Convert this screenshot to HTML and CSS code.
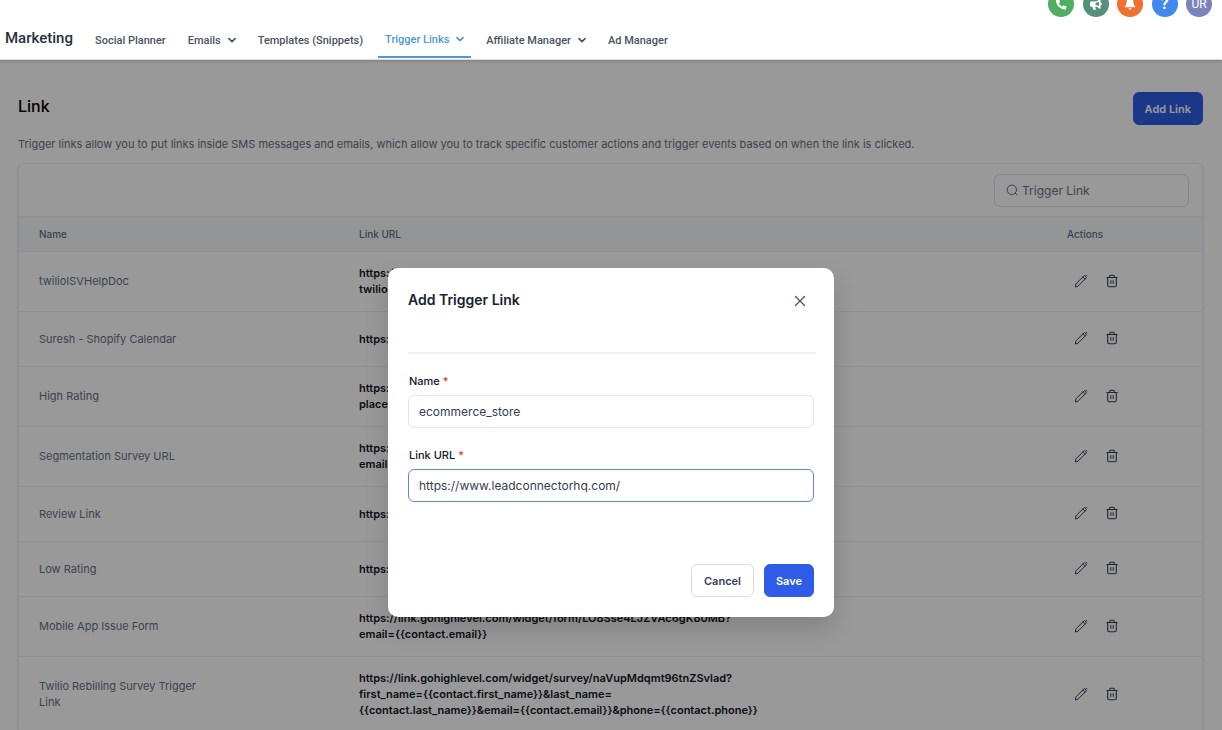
FILE: index.html
```html
<!DOCTYPE html>
<html lang="en">
<head>
  <meta charset="UTF-8" />
  <meta name="viewport" content="width=device-width, initial-scale=1.0"/>
  <title>Trigger Links</title>
  <link rel="stylesheet" href="styles.css">
</head>
<body>
  <!-- shared icons -->
  <svg class="sprite" aria-hidden="true">
    <symbol id="chevron" viewBox="0 0 8 8"><path d="M1 2.6 4 5.6 7 2.6" fill="none" stroke="currentColor" stroke-width="1.7" stroke-linecap="round" stroke-linejoin="round"/></symbol>
    <symbol id="pencil" viewBox="0 0 14 14"><path d="M1.4 12.6 2 9.8 9.8 2a.9.9 0 0 1 1.3 0l.9.9a.9.9 0 0 1 0 1.3L4.200 12zM8.800 3l2.200 2.200M12 1.200l.8.8" fill="none" stroke="currentColor" stroke-linecap="round" stroke-linejoin="round"/></symbol>
    <symbol id="trash" viewBox="0 0 14 14"><path d="M1.800 3.500h10.400M4.800 3.400V2.200c0-.5.4-.9.9-.9h2.600c.5 0 .9.4.9.9v1.200M2.700 3.800v7.500c0 .8.600 1.400 1.400 1.400h5.800c.8 0 1.400-.6 1.400-1.400V3.800" fill="none" stroke="currentColor" stroke-width="1.100" stroke-linecap="round"/><path d="M5.500 6.200v3.600M7 6.200v3.600M8.500 6.200v3.600" stroke="currentColor" stroke-width=".7"/></symbol>
  </svg>

  <header class="header">
    <div class="tools">
      <button class="tool phone" aria-label="Phone"><svg viewBox="0 0 16 16"><path fill="#fff" d="M2.700 3 5 2.200c.4-.1.7.1.9.4l1 2.500c.1.3 0 .7-.2.9L5.500 7a8.500 8.500 0 0 0 4 4l1-1.200c.2-.3.6-.4.9-.2l2.500 1c.3.2.5.5.4.9l-.8 2.300c-.1.400-.4.600-.8.600C7.300 14.400 2.200 9.300 2.200 3.800c0-.4.200-.7.5-.8z"/></svg></button>
      <button class="tool news" aria-label="Announcements"><svg viewBox="0 0 16 16"><path fill="none" stroke="#fff" stroke-width="1.800" stroke-linejoin="round" d="M7 6c2 0 4-1 5.300-2.500v9C11 11 9 10 7 10"/><path fill="#fff" d="M2.500 5H7.500v6H7l1 3.500H5L4 11H2.500C1.700 11 1.200 10.500 1.200 9.800V6.200C1.200 5.500 1.700 5 2.500 5zM13 6.300a1.700 1.700 0 0 1 0 3.400z"/></svg></button>
      <button class="tool bell" aria-label="Notifications"><svg viewBox="0 0 16 16"><path fill="#fff" d="M8 1.500c-2.600 0-4 1.900-4 4.200 0 2.700-.8 3.800-1.700 4.700-.5.600-.2 1.400.6 1.400h10.200c.8 0 1.100-.8.6-1.400-.9-.9-1.700-2-1.700-4.700 0-2.300-1.400-4.200-4-4.200zM6.300 12.800h3.400a1.700 1.700 0 0 1-3.400 0z"/></svg></button>
      <button class="tool help" aria-label="Help">?</button>
      <button class="tool user">UR</button>
    </div>
    <nav class="nav">
      <h1>Marketing</h1>
      <a href="#">Social Planner</a>
      <a href="#">Emails <svg><use href="#chevron"/></svg></a>
      <a href="#">Templates (Snippets)</a>
      <a href="#" class="active">Trigger Links <svg><use href="#chevron"/></svg></a>
      <a href="#">Affiliate Manager <svg><use href="#chevron"/></svg></a>
      <a href="#">Ad Manager</a>
    </nav>
  </header>

  <main class="main">
    <div class="title">
      <h2>Link</h2>
      <button class="btn primary">Add Link</button>
    </div>
    <p class="intro">Trigger links allow you to put links inside SMS messages and emails, which allow you to track specific customer actions and trigger events based on when the link is clicked.</p>

    <div class="card">
      <div class="search-row">
        <label class="search">
          <svg viewBox="0 0 12 12"><path d="M10.600 5.800a4.700 4.700 0 1 1-9.400 0 4.700 4.700 0 0 1 9.400 0zM9.200 9.200l1.800 1.800" fill="none" stroke="currentColor" stroke-linecap="round"/></svg>
          <input type="text" placeholder="Trigger Link" aria-label="Search trigger links">
        </label>
      </div>
      <table>
        <thead>
          <tr><th class="name">Name</th><th>Link URL</th><th class="actions">Actions</th></tr>
        </thead>
        <tbody>
          <tr>
            <td>twilioISVHelpDoc</td>
            <td class="url">https://<br>twilio</td>
            <td><button class="icon" aria-label="Edit"><svg><use href="#pencil"/></svg></button><button class="icon" aria-label="Delete"><svg><use href="#trash"/></svg></button></td>
          </tr>
          <tr>
            <td>Suresh - Shopify Calendar</td>
            <td class="url">https://</td>
            <td><button class="icon" aria-label="Edit"><svg><use href="#pencil"/></svg></button><button class="icon" aria-label="Delete"><svg><use href="#trash"/></svg></button></td>
          </tr>
          <tr>
            <td>High Rating</td>
            <td class="url">https://<br>place</td>
            <td><button class="icon" aria-label="Edit"><svg><use href="#pencil"/></svg></button><button class="icon" aria-label="Delete"><svg><use href="#trash"/></svg></button></td>
          </tr>
          <tr>
            <td>Segmentation Survey URL</td>
            <td class="url">https://<br>email</td>
            <td><button class="icon" aria-label="Edit"><svg><use href="#pencil"/></svg></button><button class="icon" aria-label="Delete"><svg><use href="#trash"/></svg></button></td>
          </tr>
          <tr>
            <td>Review Link</td>
            <td class="url">https://</td>
            <td><button class="icon" aria-label="Edit"><svg><use href="#pencil"/></svg></button><button class="icon" aria-label="Delete"><svg><use href="#trash"/></svg></button></td>
          </tr>
          <tr>
            <td>Low Rating</td>
            <td class="url">https://</td>
            <td><button class="icon" aria-label="Edit"><svg><use href="#pencil"/></svg></button><button class="icon" aria-label="Delete"><svg><use href="#trash"/></svg></button></td>
          </tr>
          <tr>
            <td>Mobile App Issue Form</td>
            <td class="url">https://link.gohighlevel.com/widget/form/LO8Sse4LJZVAc6gK80MB?<br>email={{contact.email}}</td>
            <td><button class="icon" aria-label="Edit"><svg><use href="#pencil"/></svg></button><button class="icon" aria-label="Delete"><svg><use href="#trash"/></svg></button></td>
          </tr>
          <tr>
            <td>Twilio Rebilling Survey Trigger<br>Link</td>
            <td class="url">https://link.gohighlevel.com/widget/survey/naVupMdqmt96tnZSvlad?<br>first_name={{contact.first_name}}&amp;last_name=<br>{{contact.last_name}}&amp;email={{contact.email}}&amp;phone={{contact.phone}}</td>
            <td><button class="icon" aria-label="Edit"><svg><use href="#pencil"/></svg></button><button class="icon" aria-label="Delete"><svg><use href="#trash"/></svg></button></td>
          </tr>
        </tbody>
      </table>
    </div>

    <div class="overlay">
      <form class="modal" role="dialog" aria-labelledby="modal-title">
        <div class="modal-head">
          <h3 id="modal-title">Add Trigger Link</h3>
          <button type="button" class="close" aria-label="Close"><svg viewBox="0 0 12 12"><path d="M1.500 1.500l9 9M10.500 1.500l-9 9" stroke="currentColor" stroke-width="1.300" stroke-linecap="round"/></svg></button>
        </div>
        <div class="field">
          <label for="name">Name <span>*</span></label>
          <input type="text" id="name" value="ecommerce_store">
        </div>
        <div class="field">
          <label for="url">Link URL <span>*</span></label>
          <input type="text" id="url" class="current" value="https://www.leadconnectorhq.com/">
        </div>
        <div class="modal-foot">
          <button type="button" class="btn">Cancel</button>
          <button type="button" class="btn primary">Save</button>
        </div>
      </form>
    </div>
  </main>
</body>
</html>
```
FILE: styles.css
```css
* { box-sizing: border-box; }
body { margin: 0; height: 100vh; overflow: hidden; display: flex; flex-direction: column; font-family: Inter, sans-serif; font-size: 12px; color: #111827; background: #fff; }
h1, h2, h3, p { margin: 0; }
button, input { font: inherit; color: inherit; }
button { cursor: pointer; }
.sprite { display: none; }

/* header */
.header { height: 60px; flex: none; background: #fff; border-bottom: 1px solid #ddd; box-shadow: 0 1px 3px rgba(0,0,0,0.2); z-index: 2; font-family: Roboto, sans-serif; }
.tools { display: flex; justify-content: space-between; width: 164px; height: 26px; margin: -9px 10px 0 auto; }
.tool { display: flex; align-items: center; justify-content: center; width: 26px; height: 26px; padding: 0; border: none; border-radius: 50%; color: #fff; line-height: 1; }
.tool svg { width: 14px; height: 14px; }
.phone { background: #4fae63; }
.news { background: #569078; }
.bell { background: #f07030; }
.help { background: #4189ee; font-size: 16px; font-weight: 700; }
.user { background: #7b83bb; font-size: 12px; }
.nav { display: flex; gap: 8px; height: 41px; padding-left: 5px; }
.nav h1 { width: 75px; font-size: 15px; line-height: 42px; font-weight: 500; color: #283040; }
.nav a { display: flex; align-items: center; gap: 7px; height: 41px; padding: 5px 7px 0; font-size: 11px; font-weight: 500; color: #4a5260; text-decoration: none; }
.nav svg { width: 8px; height: 8px; }
.nav a.active { color: #4a9ad8; border-bottom: 2px solid #4a9ad8; }

/* page */
.main { position: relative; flex: 1; overflow: hidden; padding: 32px 19px 0 18px; }
.title { display: flex; justify-content: space-between; }
.title h2 { font-size: 16px; line-height: 29px; font-weight: 500; color: #000; }
.btn { height: 33px; padding: 0 12px; border: 1px solid #d8dbe2; border-radius: 6px; background: #fff; font-size: 11px; font-weight: 600; color: #344054; }
.btn.primary { padding: 0 11px; background: #2e5ce6; border-color: #2e5ce6; color: #fff; }
.intro { margin: 11px 0; font-size: 11px; line-height: 16px; color: #667085; }
.card { border: 1px solid #eceef0; border-radius: 6px; box-shadow: 0 1px 3px rgba(0,0,0,0.12); }
.search-row { display: flex; justify-content: flex-end; height: 52px; padding: 10px 13px; }
.search { display: flex; align-items: center; gap: 4px; width: 195px; height: 33px; padding: 0 11px 1px; border: 1px solid #dfe1e5; border-radius: 6px; color: #667085; }
.search svg { flex: none; width: 12px; height: 12px; }
.search input { width: 100%; border: none; padding: 0; outline: none; background: none; }
.search input::placeholder { color: #667085; opacity: 1; }

table { width: 100%; border-collapse: collapse; table-layout: fixed; }
th { height: 35px; padding: 0 20px; background: #f5f8fc; border-top: 1px solid #eceef1; border-bottom: 1px solid #eceef1; text-align: left; font-size: 10px; font-weight: 500; color: #667085; }
th.name { width: 320px; }
th.actions { width: 155px; }
td { height: 55px; padding: 13px 20px 14px; border-bottom: 1px solid #eceef1; font-size: 11px; line-height: 16px; color: #667085; }
td.url { font-weight: 600; color: #111827; white-space: nowrap; }
.icon { width: 14px; height: 14px; padding: 0; margin: 0 11px 2px 7px; border: none; background: none; color: #344054; vertical-align: middle; }
.icon + .icon { margin-left: 6px; }
.icon svg { display: block; width: 14px; height: 14px; }

/* modal */
.overlay { position: absolute; inset: 0; display: flex; justify-content: center; align-items: flex-start; padding-top: 208px; background: rgba(0,0,0,0.4); }
.modal { width: 446px; padding: 20px; background: #fff; border-radius: 10px; box-shadow: 0 12px 24px rgba(0,0,0,0.15); }
.modal-head { display: flex; justify-content: space-between; height: 66px; margin-right: -2px; margin-bottom: 17px; border-bottom: 2px solid #f0f1f3; }
.modal-head h3 { font-size: 14px; line-height: 23px; font-weight: 600; color: #182230; }
.close { width: 12px; height: 12px; margin: 7px 10px 0 0; padding: 0; border: none; background: none; color: #475467; }
.close svg { display: block; width: 12px; height: 12px; }
.field { margin-bottom: 17px; }
.field label { display: block; padding: 0 1px; margin-bottom: 4px; font-size: 11px; line-height: 20px; font-weight: 500; }
.field span { color: #e03020; }
.field input { width: 100%; height: 33px; padding: 0 10px; border: 1px solid #e3e5e9; border-radius: 6px; outline: none; color: #344054; }
.field input.current { border-color: #5b83f0; }
.modal-foot { display: flex; justify-content: flex-end; gap: 10px; margin-top: 62px; }
```
